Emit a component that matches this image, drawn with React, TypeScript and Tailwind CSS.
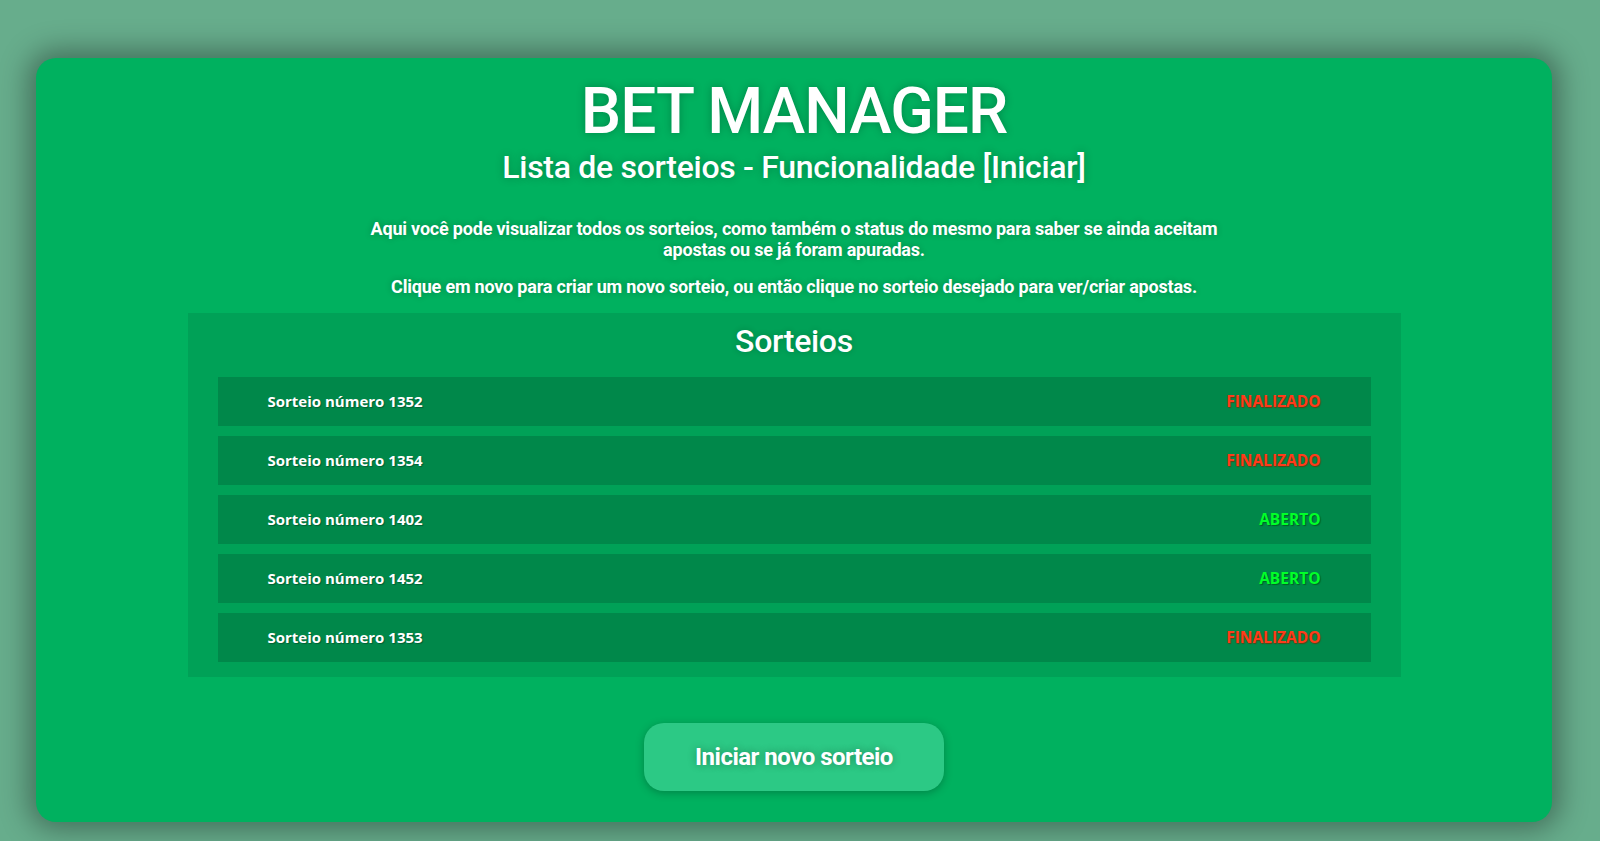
const sorteios = [
  { numero: 1352, aberto: false },
  { numero: 1354, aberto: false },
  { numero: 1402, aberto: true },
  { numero: 1452, aberto: true },
  { numero: 1353, aberto: false },
];

function SorteioRow({ numero, aberto }: { numero: number; aberto: boolean }) {
  return (
    <div className="h-[49px] flex items-center justify-between px-[50px] bg-[#00884a] cursor-pointer font-['Open_Sans',sans-serif] text-[15px] font-bold">
      <span className="text-white [text-shadow:1px_1px_1px_rgba(0,0,0,0.3)]">
        Sorteio número {numero}
      </span>
      {aberto ? (
        <span className="text-[15.5px] text-[#00ff2a] [text-shadow:1px_1px_1px_rgba(0,80,20,0.7)]">ABERTO</span>
      ) : (
        <span className="text-[15.5px] text-[#ff3b1a] [text-shadow:1px_1px_1px_rgba(120,40,0,0.7)]">FINALIZADO</span>
      )}
    </div>
  );
}

export default function App() {
  return (
    <div className="min-h-screen bg-[#67ad8c] pt-[58px] pb-[19px] font-['Roboto',sans-serif] text-white">
      <div className="ml-[36px] w-[1516px] h-[764px] rounded-[20px] bg-[#00b15f] shadow-[0_0_28px_8px_rgba(0,0,0,0.35)] flex flex-col items-center pt-[16px]">
        <h1 className="text-[64px] leading-[75px] font-medium tracking-[-1px] [text-shadow:0_0_8px_rgba(0,0,0,0.25)]">
          BET MANAGER
        </h1>
        <h2 className="text-[32px] leading-[37px] font-medium tracking-[-0.3px] [text-shadow:0_0_8px_rgba(0,0,0,0.25)]">
          Lista de sorteios - Funcionalidade [Iniciar]
        </h2>

        <div className="mt-[32px] max-w-[870px] text-center text-[18px] leading-[21px] font-bold tracking-[-0.2px] [text-shadow:0_0_6px_rgba(0,0,0,0.25)]">
          <p>
            Aqui você pode visualizar todos os sorteios, como também o status do mesmo para saber se ainda aceitam
            apostas ou se já foram apuradas.
          </p>
        </div>
        <p className="mt-[16px] text-center text-[18px] leading-[21px] font-bold tracking-[-0.2px] [text-shadow:0_0_6px_rgba(0,0,0,0.25)]">
          Clique em novo para criar um novo sorteio, ou então clique no sorteio desejado para ver/criar apostas.
        </p>

        <section className="mt-[16px] w-[1213px] bg-[#00a157] px-[30px] pt-[11px] pb-[15px]">
          <h3 className="text-center text-[32px] leading-[35px] font-medium tracking-[-0.3px] mb-[18px] [text-shadow:0_0_6px_rgba(0,0,0,0.2)]">
            Sorteios
          </h3>
          <div className="flex flex-col gap-[10px]">
            {sorteios.map((s) => (
              <SorteioRow key={s.numero} numero={s.numero} aberto={s.aberto} />
            ))}
          </div>
        </section>

        <button className="mt-[46px] w-[300px] h-[68px] rounded-[20px] bg-[#2cc985] text-[24px] font-bold tracking-[-0.5px] text-white shadow-[0_2px_8px_rgba(0,0,0,0.25)] [text-shadow:0_0_8px_rgba(0,0,0,0.3)]">
          Iniciar novo sorteio
        </button>
      </div>
    </div>
  );
}
